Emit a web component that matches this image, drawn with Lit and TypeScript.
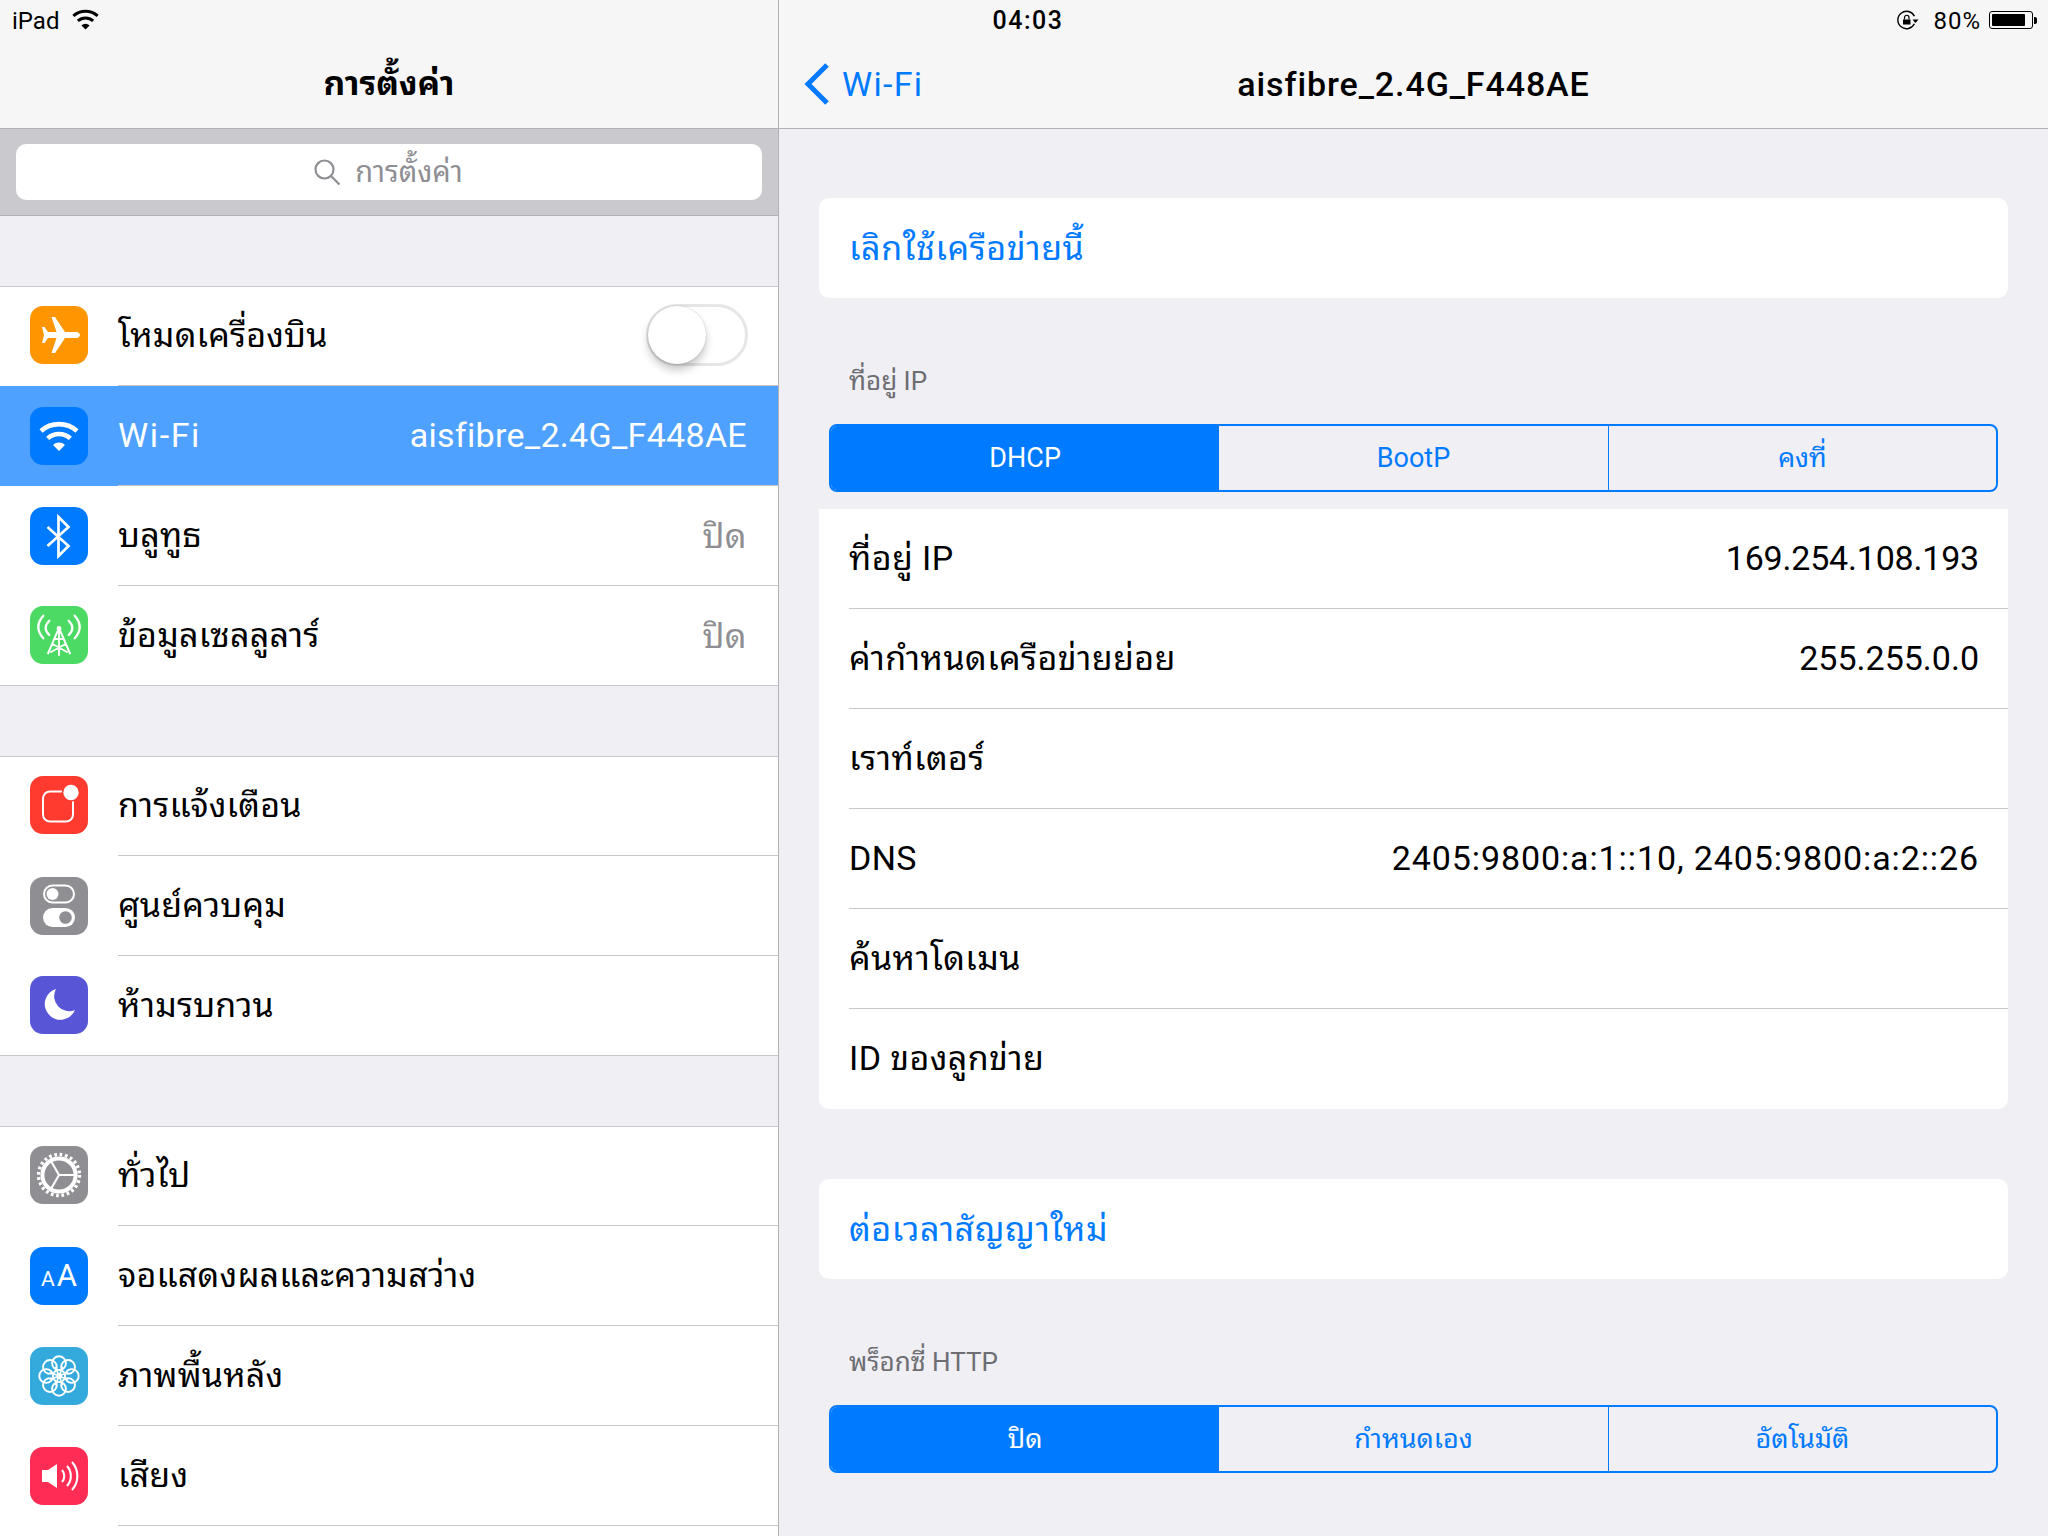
import { LitElement, html, css, svg } from "lit";
import { customElement } from "lit/decorators.js";

const wifiArcs = svg`<path d="M11 24A27 27 0 0 1 47 24" fill="none" stroke="currentColor" stroke-width="4.6"/><path d="M17.6 31.4A17 17 0 0 1 40.4 31.4" fill="none" stroke="currentColor" stroke-width="4.6"/><path d="M23 38A8.5 8.5 0 0 1 35 38L29 44Z" fill="currentColor"/>`;

const gearTeeth = svg`<circle cx="29" cy="29" r="20.5" fill="none" stroke="#fff" stroke-width="3.4" stroke-dasharray="2.7 2.667"/>`;

const angles = [0, 45, 90, 135, 180, 225, 270, 315];
const petals = angles.map(
  (a) => svg`<circle cx="29" cy="16.2" r="6.9" fill="none" stroke="#fff" stroke-width="1.9" transform="rotate(${a} 29 29)"/><path d="M29 29V19" stroke="#fff" stroke-width="1.7" transform="rotate(${a + 22.5} 29 29)"/>`
);

const icons: Record<string, unknown> = {
  plane: svg`<path fill="#fff" d="M46.5 26H35L25 11H21.5L26.5 26H18L14.5 21H12L14 29L12 37H14.5L18 32H26.5L21.5 47H25L35 32H46.5C48.5 32 50 30.5 50 29C50 27.5 48.5 26 46.5 26Z"/>`,
  wifi: wifiArcs,
  bt: svg`<path d="M17.5 20L38.5 39L28.5 49V10L38.5 20L17.5 39" fill="none" stroke="#fff" stroke-width="2.7"/>`,
  cell: svg`<g fill="none" stroke="#fff" stroke-linecap="round"><path stroke-width="2.3" d="M13.3 9.7Q3.3 21 13.3 32.3M44.7 9.7Q54.7 21 44.7 32.3M19.3 14.7Q12 22 19.3 29M38.7 14.7Q46 22 38.7 29"/><path stroke-width="1.9" d="M29 22V49M29 22L18 47.5M29 22L40 47.5M24.5 33H33.5M22.5 38L37 46M35.5 38L21 46"/></g><circle cx="29" cy="22.5" r="2.4" fill="#fff"/>`,
  note: svg`<rect x="13" y="15.5" width="30" height="30" rx="7" fill="none" stroke="#fff" stroke-width="2"/><circle cx="41" cy="16.5" r="9.3" fill="#ff3b30"/><circle cx="41" cy="16.5" r="7.7" fill="#fff"/>`,
  cc: svg`<rect x="14" y="8.5" width="30" height="17" rx="8.5" fill="none" stroke="#fff" stroke-width="2"/><circle cx="22.5" cy="17" r="6" fill="#fff"/><rect x="13" y="31" width="32" height="19" rx="9.5" fill="#fff"/><circle cx="35.5" cy="40.5" r="6.3" fill="#8e8e93"/>`,
  moon: svg`<path fill="#fff" d="M26 13A15.7 15.7 0 1 0 45 34A15 15 0 0 1 26 13Z"/>`,
  gear: svg`${gearTeeth}<g fill="none" stroke="#fff"><circle cx="29" cy="29" r="16.6" stroke-width="4"/><path d="M29 29H46M29 29L20.5 43.7M29 29L20.5 14.3" stroke-width="2.1"/></g>`,
  flower: svg`${petals}<circle cx="29" cy="29" r="3.2" fill="#fff"/>`,
  sound: svg`<path fill="#fff" d="M12 23H18L27 17V41L18 35H12Z"/><g fill="none" stroke="#fff" stroke-width="2.1"><path d="M32 23A9 9 0 0 1 32 35M37 19A15 15 0 0 1 37 39M42 15A21 21 0 0 1 42 43"/></g>`,
};

type Row = { icon: string; color: string; label: string; value?: string; toggle?: boolean; selected?: boolean; text?: boolean };

const groups: Row[][] = [
  [
    { icon: "plane", color: "#ff9500", label: "โหมดเครื่องบิน", toggle: true },
    { icon: "wifi", color: "#007aff", label: "Wi-Fi", value: "aisfibre_2.4G_F448AE", selected: true },
    { icon: "bt", color: "#007aff", label: "บลูทูธ", value: "ปิด" },
    { icon: "cell", color: "#4cd964", label: "ข้อมูลเซลลูลาร์", value: "ปิด" },
  ],
  [
    { icon: "note", color: "#ff3b30", label: "การแจ้งเตือน" },
    { icon: "cc", color: "#8e8e93", label: "ศูนย์ควบคุม" },
    { icon: "moon", color: "#5856d6", label: "ห้ามรบกวน" },
  ],
  [
    { icon: "gear", color: "#8e8e93", label: "ทั่วไป" },
    { icon: "aa", color: "#007aff", label: "จอแสดงผลและความสว่าง", text: true },
    { icon: "flower", color: "#34aadc", label: "ภาพพื้นหลัง" },
    { icon: "sound", color: "#ff2d55", label: "เสียง" },
    { icon: "", color: "transparent", label: "" },
  ],
];

const details: [string, string][] = [
  ["ที่อยู่ IP", "169.254.108.193"],
  ["ค่ากำหนดเครือข่ายย่อย", "255.255.0.0"],
  ["เราท์เตอร์", ""],
  ["DNS", "2405:9800:a:1::10, 2405:9800:a:2::26"],
  ["ค้นหาโดเมน", ""],
  ["ID ของลูกข่าย", ""],
];

@customElement("app-root")
export class AppRoot extends LitElement {
  static styles = css`
    :host {
      display: block;
      position: relative;
      width: 2048px;
      height: 1536px;
      overflow: hidden;
      background: #efeff4;
      color: #000;
      font-family: Roboto, "Noto Sans Thai Looped", "Waree", "Loma", "Garuda", "Noto Sans Thai", "Noto Sans", sans-serif;
      line-height: 40px;
    }
    .layout {
      display: grid;
      grid-template-columns: 779px 1fr;
      height: 1536px;
    }
    .status {
      position: absolute;
      inset: 0 0 auto 0;
      height: 42px;
      font-size: 24px;
    }
    .status-left {
      position: absolute;
      left: 12px;
      top: 0;
      height: 42px;
      display: flex;
      align-items: center;
      gap: 11px;
    }
    .status-left svg { width: 31px; height: 24px; margin-top: -2px; }
    .time {
      position: absolute;
      left: 982px;
      width: 92px;
      top: 0;
      line-height: 42px;
      text-align: center;
      font-size: 25px;
      font-weight: 500;
      letter-spacing: 1.5px;
    }
    .status-right {
      position: absolute;
      right: 11px;
      top: 0;
      height: 42px;
      display: flex;
      align-items: center;
      gap: 8px;
    }
    .status-right svg { width: 23px; height: 20px; margin-top: -2px; margin-right: 5px; }
    .pct { letter-spacing: 1px; }
    .battery {
      display: flex;
      align-items: center;
      width: 48px;
      height: 18px;
      margin-top: -2px;
    }
    .battery-body {
      width: 44px;
      height: 18px;
      box-sizing: border-box;
      border: 1px solid #000;
      border-radius: 3px;
      padding: 2px;
    }
    .battery-fill { width: 88%; height: 100%; background: #000; border-radius: 1px; }
    .battery-nub { width: 3px; height: 7px; background: #000; border-radius: 0 2px 2px 0; margin-left: 1px; }
    .side {
      border-right: 1px solid #b2b2b6;
      overflow: hidden;
      background: #efeff4;
      height: 1536px;
    }
    .nav {
      height: 129px;
      box-sizing: border-box;
      background: #f6f6f6;
      border-bottom: 1px solid #b2b2b2;
      display: flex;
      align-items: center;
      justify-content: center;
      padding-top: 40px;
      font-size: 34px;
      font-weight: 500;
      position: relative;
    }
    .side .nav { font-weight: 700; font-size: 33.5px; }
    .main .nav { letter-spacing: 0.9px; }
    .search-bar {
      height: 87px;
      box-sizing: border-box;
      background: #c9c9ce;
      border-bottom: 1px solid #b2b2b6;
      padding: 15px 16px;
    }
    .search {
      height: 56px;
      background: #fff;
      border-radius: 10px;
      display: flex;
      align-items: center;
      justify-content: center;
      gap: 14px;
      color: #8e8e93;
      font-size: 29px;
      padding-right: 2px;
    }
    .search svg { width: 28px; height: 28px; }
    .groups { display: flex; flex-direction: column; gap: 70px; padding-top: 70px; }
    .group { background: #fff; border-top: 1px solid #c8c7cc; }
    .row {
      height: 100px;
      box-sizing: border-box;
      display: flex;
      align-items: center;
      padding-left: 30px;
      font-size: 34px;
      position: relative;
    }
    .row:first-child { height: 99px; }
    .row:last-child { border-bottom: 1px solid #c8c7cc; }
    .row.selected { background: #4fa1ff; color: #fff; }
    .ico {
      width: 58px;
      height: 58px;
      flex: none;
      border-radius: 13px;
      margin-bottom: 1px;
      display: flex;
      align-items: center;
      justify-content: center;
      color: #fff;
    }
    .row:first-child .ico { margin-bottom: 3px; }
    .ico svg { width: 58px; height: 58px; display: block; }
    .aa { font-size: 31px; line-height: 1; display: flex; align-items: baseline; gap: 2px; }
    .aa small { font-size: 21px; }
    .content {
      flex: 1;
      height: 100%;
      margin-left: 30px;
      padding-right: 31px;
      padding-bottom: 1px;
      box-sizing: border-box;
      display: flex;
      align-items: center;
      justify-content: space-between;
      border-bottom: 1px solid #c8c7cc;
      letter-spacing: 0.2px;
    }
    .row:first-child .content { padding-bottom: 3px; }
    .row:last-child .content { border-bottom: 0; }
    .value { color: #8e8e93; font-size: 34px; letter-spacing: 0.4px; padding-top: 1px; }
    .row.selected .value { color: #fff; letter-spacing: 0.3px; padding-top: 0; }
    .row.selected .label { letter-spacing: 1.6px; }
    .switch {
      width: 102px;
      height: 62px;
      box-sizing: border-box;
      border: 3px solid #e6e6e6;
      border-radius: 31px;
      position: relative;
      margin-right: -1px;
    }
    .knob {
      position: absolute;
      left: -1px;
      top: -1px;
      width: 58px;
      height: 58px;
      border-radius: 50%;
      background: #fff;
      box-shadow: 0 6px 8px rgba(0, 0, 0, 0.22), 0 0 2px rgba(0, 0, 0, 0.2);
    }
    .main { background: #efeff4; height: 1536px; overflow: hidden; }
    .back {
      position: absolute;
      left: 24px;
      top: 0;
      height: 128px;
      box-sizing: border-box;
      padding-top: 40px;
      display: flex;
      align-items: center;
      gap: 12px;
      color: #007aff;
      font-weight: 400;
      letter-spacing: 1.3px;
    }
    .back svg { width: 27px; height: 44px; }
    .body { padding: 69px 40px 0 40px; display: flex; flex-direction: column; }
    .card {
      background: #fff;
      border-radius: 10px;
    }
    .action {
      height: 100px;
      display: flex;
      align-items: center;
      padding-left: 30px;
      font-size: 34px;
      color: #007aff;
      letter-spacing: 0.6px;
    }
    .caption {
      height: 126px;
      box-sizing: border-box;
      padding: 67px 0 0 30px;
      font-size: 26px;
      line-height: 32px;
      color: #6d6d72;
    }
    .seg {
      margin: 0 10px;
      height: 68px;
      box-sizing: border-box;
      border: 2px solid #007aff;
      border-radius: 8px;
      display: grid;
      grid-template-columns: repeat(3, 1fr);
      color: #007aff;
      font-size: 27px;
      overflow: hidden;
    }
    .seg div {
      display: flex;
      align-items: center;
      justify-content: center;
      border-left: 1.5px solid #007aff;
    }
    .seg div:first-child, .seg div.on + div { border-left: 0; }
    .seg div.on { background: #007aff; color: #fff; }
    .table { margin-top: 17px; border-radius: 0 0 10px 10px; display: flex; flex-direction: column; }
    .d-row {
      height: 100px;
      margin-left: 30px;
      padding-right: 29px;
      padding-bottom: 2px;
      box-sizing: border-box;
      display: flex;
      align-items: center;
      justify-content: space-between;
      font-size: 34px;
      border-bottom: 1px solid #c8c7cc;
    }
    .d-row:last-child { border-bottom: 0; }
    .d-key { letter-spacing: 0.4px; }
    .d-val.wide { letter-spacing: 0.9px; }
    .d-val.tight { letter-spacing: -0.2px; }
    .gap { height: 70px; flex: none; }
  `;

  private segment(items: string[]) {
    return html`<div class="seg">${items.map((s, i) => html`<div class=${i === 0 ? "on" : ""}>${s}</div>`)}</div>`;
  }

  render() {
    return html`
      <div class="layout">
        <aside class="side">
          <div class="nav">การตั้งค่า</div>
          <div class="search-bar">
            <div class="search">
              <svg viewBox="0 0 28 28" fill="none" stroke="#8e8e93" stroke-width="2.2">
                <circle cx="11.5" cy="11.5" r="9"/><path d="M18 18L26.5 26.5"/>
              </svg>
              <span>การตั้งค่า</span>
            </div>
          </div>
          <div class="groups">
            ${groups.map(
              (g) => html`<div class="group">
                ${g.map(
                  (r) => html`<div class="row ${r.selected ? "selected" : ""}">
                    <div class="ico" style="background:${r.color}">
                      ${r.text
                        ? html`<span class="aa"><small>A</small><span>A</span></span>`
                        : icons[r.icon]
                        ? html`<svg viewBox="0 0 58 58">${icons[r.icon]}</svg>`
                        : ""}
                    </div>
                    <div class="content">
                      <span class="label">${r.label}</span>
                      ${r.value ? html`<span class="value">${r.value}</span>` : ""}
                      ${r.toggle ? html`<div class="switch"><div class="knob"></div></div>` : ""}
                    </div>
                  </div>`
                )}
              </div>`
            )}
          </div>
        </aside>
        <main class="main">
          <div class="nav">
            <div class="back">
              <svg viewBox="0 0 27 44" fill="none" stroke="#007aff" stroke-width="5"><path d="M24 3L5 22L24 41"/></svg>
              <span>Wi-Fi</span>
            </div>
            aisfibre_2.4G_F448AE
          </div>
          <div class="body">
            <div class="card action">เลิกใช้เครือข่ายนี้</div>
            <div class="caption">ที่อยู่ IP</div>
            ${this.segment(["DHCP", "BootP", "คงที่"])}
            <div class="card table">
              ${details.map(
                ([k, v], i) => html`<div class="d-row"><span class="d-key">${k}</span><span class="d-val ${i === 3 ? "wide" : i === 0 ? "tight" : ""}">${v}</span></div>`
              )}
            </div>
            <div class="gap"></div>
            <div class="card action">ต่อเวลาสัญญาใหม่</div>
            <div class="caption">พร็อกซี่ HTTP</div>
            ${this.segment(["ปิด", "กำหนดเอง", "อัตโนมัติ"])}
          </div>
        </main>
      </div>
      <div class="status">
        <div class="status-left">
          <span>iPad</span>
          <svg viewBox="6 14 46 32" style="color:#000">${wifiArcs}</svg>
        </div>
        <div class="time">04:03</div>
        <div class="status-right">
          <svg viewBox="0 0 23 20" fill="none" stroke="#000" stroke-width="1.4">
            <path d="M17.4 6.3A8.7 8.7 0 1 0 17.4 13.7"/>
            <rect x="6" y="9.5" width="7.5" height="5" fill="#000" stroke="none"/>
            <path d="M7.5 9.5V7.5A2.2 2.2 0 0 1 12 7.5V9.5" stroke-width="1.2"/>
            <path d="M15.5 9.5H21.5L18.5 13Z" fill="#000" stroke="none"/>
          </svg>
          <span class="pct">80%</span>
          <div class="battery">
            <div class="battery-body"><div class="battery-fill"></div></div>
            <div class="battery-nub"></div>
          </div>
        </div>
      </div>
    `;
  }
}
